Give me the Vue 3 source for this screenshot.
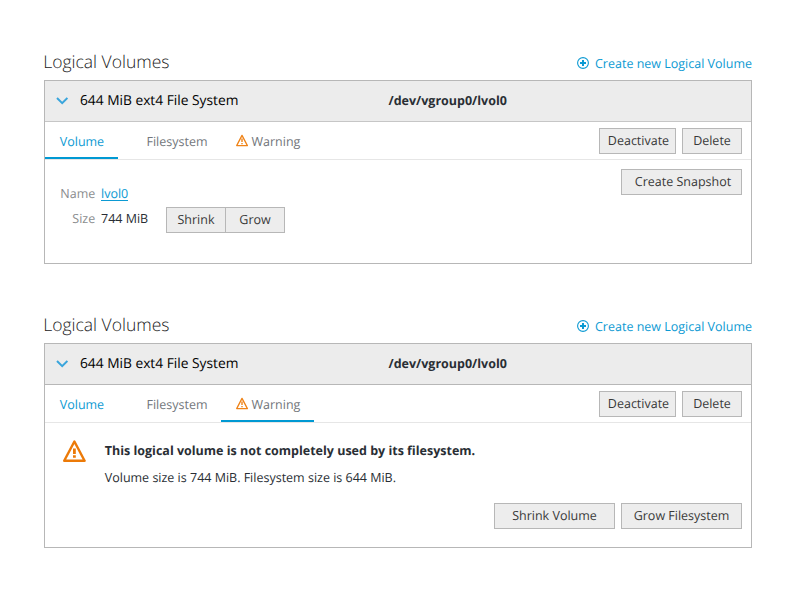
<script setup>
const volumes = [
  { id: 'details', active: 'Volume' },
  { id: 'warning', active: 'Warning' },
]
const tabs = ['Volume', 'Filesystem', 'Warning']
</script>

<template>
  <main class="page">
    <section v-for="vol in volumes" :key="vol.id" class="group">
      <header class="group-head">
        <h2 class="title">Logical Volumes</h2>
        <a class="create">
          <svg class="plus" width="12" height="12" viewBox="0 0 12 12" fill="none" stroke="#0c9ad3">
            <circle cx="6" cy="6" r="5.4" stroke-width="1.1" />
            <path d="M6 3v6M3 6h6" stroke-width="2" />
          </svg>
          <span>Create new Logical Volume</span>
        </a>
      </header>

      <article class="panel" :class="vol.id">
        <div class="panel-head">
          <svg class="chevron" width="12" height="8" viewBox="0 0 12 8" fill="none" stroke="#39a5dc" stroke-width="2">
            <path d="M1 1L6.2 6.2L11.4 1" />
          </svg>
          <span class="kind">644 MiB ext4 File System</span>
          <strong class="device">/dev/vgroup0/lvol0</strong>
        </div>

        <div class="toolbar">
          <nav class="tabs">
            <a
              v-for="tab in tabs"
              :key="tab"
              class="tab"
              :class="[tab.toLowerCase(), { active: tab === vol.active }]"
            >
              <svg v-if="tab === 'Warning'" class="small-warn" width="13" height="13" viewBox="0 0 13 13" fill="none" stroke="#ef8318">
                <path d="M6 1.4L11.4 11.6H0.7Z" stroke-width="1.3" stroke-linejoin="round" />
                <path d="M6 4.6v3.4M6 8.9v1.4" stroke-width="1.4" />
              </svg>
              <span>{{ tab }}</span>
            </a>
          </nav>
          <div class="actions">
            <button class="btn deactivate">Deactivate</button>
            <button class="btn delete">Delete</button>
          </div>
        </div>

        <div v-if="vol.active === 'Volume'" class="body volume-body">
          <dl class="facts">
            <dt>Name</dt>
            <dd><a class="name-link">lvol0</a></dd>
            <dt>Size</dt>
            <dd class="size">
              <span class="amount">744 MiB</span>
              <span class="btn-group">
                <button class="btn">Shrink</button>
                <button class="btn">Grow</button>
              </span>
            </dd>
          </dl>
          <button class="btn wide snapshot">Create Snapshot</button>
        </div>

        <div v-else class="body warning-body">
          <div class="message">
            <svg class="big-warn" width="24" height="23" viewBox="0 0 24 23" fill="none" stroke="#ec7a08">
              <path d="M12.4 1.5L22.6 20.8H2.2Z" stroke-width="2.4" stroke-linejoin="round" />
              <path d="M12.4 8.6v5.3M12.4 15.2v2.6" stroke-width="2.8" />
            </svg>
            <div class="message-text">
              <p class="lead">This logical volume is not completely used by its filesystem.</p>
              <p class="detail">Volume size is 744 MiB. Filesystem size is 644 MiB.</p>
            </div>
          </div>
          <div class="fixes">
            <button class="btn wide">Shrink Volume</button>
            <button class="btn wide">Grow Filesystem</button>
          </div>
        </div>
      </article>
    </section>
  </main>
</template>

<style>
body {
  background: #fff;
}
</style>

<style scoped>
.page {
  box-sizing: border-box;
  width: 800px;
  height: 600px;
  padding: 50px 48px 0 44px;
  font: 12.5px/20px "Open Sans", sans-serif;
  text-rendering: geometricPrecision;
  color: #292e34;
}
.group {
  height: 263px;
}
.group-head {
  display: flex;
  justify-content: space-between;
  height: 30px;
}
.title {
  margin: 0 0 0 -0.75px;
  font-size: 17.5px;
  font-weight: 300;
  line-height: 24px;
  color: #222;
}
.create {
  display: flex;
  gap: 6px;
  height: 20px;
  margin-top: 4px;
  color: #0c9ad3;
}
.plus {
  margin-top: 3px;
}
.panel {
  box-sizing: border-box;
  height: 184px;
  border: 1px solid #b7b7b7;
}
.panel.warning {
  height: 205px;
}
.panel-head {
  display: flex;
  align-items: center;
  box-sizing: border-box;
  height: 41px;
  padding: 0 0 2px 11px;
  border-bottom: 1px solid #c6c6c6;
  background: #ececec;
}
.warning .panel-head {
  border-color: #b7b7b7;
}
.chevron {
  margin: 2px 12px 0 0;
}
.kind {
  width: 308.5px;
  padding-top: 2px;
  font-size: 13.75px;
  color: #000;
}
.device {
  padding-top: 2px;
}
.toolbar {
  display: flex;
  justify-content: space-between;
  box-sizing: border-box;
  height: 38px;
  padding-right: 9px;
  border-bottom: 1px solid #e6e6e6;
}
.tabs {
  display: flex;
}
.tab {
  display: flex;
  box-sizing: border-box;
  height: 37px;
  padding: 10px 0 0 14.75px;
  border-bottom: 2px solid transparent;
  color: #72767b;
}
.tab.volume {
  width: 73px;
  color: #0c9ad3;
}
.tab.filesystem {
  width: 103px;
  padding-left: 28.5px;
}
.tab.warning {
  width: 93px;
}
.tab.active {
  border-color: #0099d3;
}
.small-warn {
  flex: none;
  margin: 2px 2.75px 0 0;
}
.actions {
  display: flex;
  gap: 6px;
  padding-top: 6px;
}
.btn {
  box-sizing: border-box;
  height: 26px;
  margin: 0;
  padding: 0 0 1px;
  border: 1px solid #b7b7b7;
  border-radius: 0;
  background: #ededed;
  font: 12.5px/20px "Open Sans", sans-serif;
  text-rendering: inherit;
  color: #393939;
}
.deactivate {
  width: 77px;
  padding-left: 2px;
}
.delete {
  width: 60px;
}
.wide {
  width: 121px;
}
.snapshot {
  padding-left: 3px;
}
.actions .btn,
.snapshot,
.fixes .btn {
  padding-bottom: 2px;
  line-height: 21px;
}
.volume-body {
  display: flex;
  justify-content: space-between;
  padding: 9px 9px 0 15px;
}
.facts {
  display: grid;
  grid-template-columns: 35.25px auto;
  grid-template-rows: 23px 26px;
  column-gap: 5.75px;
  margin: 15px 0 0;
}
.facts dt {
  color: #8b8d8f;
  text-align: right;
}
.facts dt,
.facts dd {
  margin: 0;
}
.facts dt:last-of-type {
  padding-top: 2px;
}
.name-link {
  display: inline-block;
  height: 16px;
  border-bottom: 1px solid #0c9ad3;
  color: #0c9ad3;
}
.size {
  display: flex;
}
.amount {
  width: 65px;
  padding-top: 2px;
}
.btn-group {
  display: flex;
}
.btn-group .btn {
  width: 60px;
}
.btn-group .btn + .btn {
  margin-left: -1px;
}
.warning-body {
  padding: 17px 9px 0 17px;
}
.message {
  display: flex;
  gap: 18.75px;
  height: 63px;
}
.message-text {
  padding-top: 1px;
}
.message p {
  margin: 0;
}
.lead {
  font-weight: 700;
}
.message .detail {
  margin-top: 7px;
}
.fixes {
  display: flex;
  justify-content: flex-end;
  gap: 6px;
}
</style>
